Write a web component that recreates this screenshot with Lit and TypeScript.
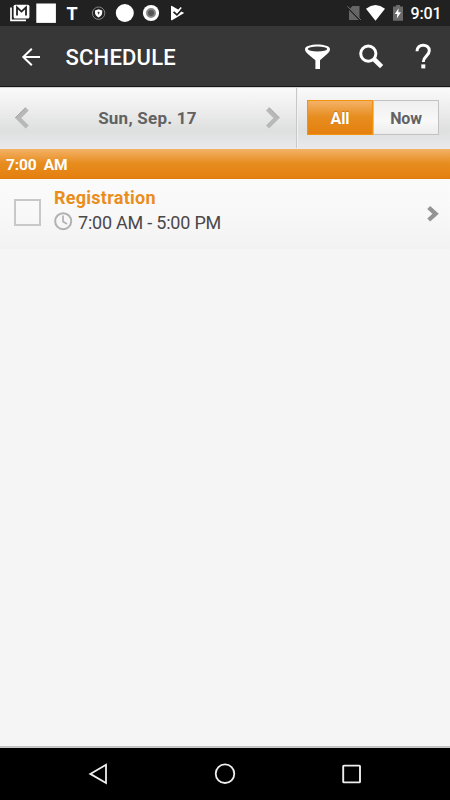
import { LitElement, html, css, svg } from "lit";
import { customElement, state } from "lit/decorators.js";

const icon = (x: number, y: number, w: number, h: number, body: unknown) =>
  html`<svg width=${w} height=${h} viewBox="${x} ${y} ${w} ${h}" aria-hidden="true">${body}</svg>`;

@customElement("status-bar")
class StatusBar extends LitElement {
  static styles = css`
    :host { display: flex; height: 26px; background: #212121; color: #fff; padding: 0 9px 0 10px; box-sizing: border-box; }
    svg { display: block; flex: none; }
    .left { display: flex; }
    .right { display: flex; margin-left: auto; }
    .t { width: 26px; text-align: center; margin-right: 6px; font: 700 18px/28px Roboto, sans-serif; }
    .clock { font: 500 16px/28px Roboto, sans-serif; margin-left: 6.5px; width: 30.5px; white-space: nowrap; letter-spacing: -.15px; }
  `;
  render() {
    return html`
      <div class="left">
        ${icon(10, 0, 49, 26, svg`
          <path d="M11 7.5V20.3H26" fill="none" stroke="#fff" stroke-width="1.7"/>
          <rect x="13.6" y="4.7" width="15.8" height="13.8" rx="1.6" fill="#fff"/>
          <path d="M17 15.6V7.4L21.5 11.6L26 7.4V15.6" fill="none" stroke="#212121" stroke-width="1.8"/>
          <rect x="36.3" y="3.5" width="19.6" height="19.4" fill="#fff"/>`)}
        <span class="t">T</span>
        ${icon(91, 0, 96, 26, svg`
          <circle cx="98.6" cy="13.2" r="6.2" fill="none" stroke="#aaa" stroke-width=".7"/>
          <path d="M98.6 9.3L102.2 10.5V13Q102 15.8 98.6 17.5Q95.2 15.8 95 13V10.5Z" fill="#fff"/>
          <path d="M97.7 11.8h1.8v1.2l-.9 1.8l-.9-1.8z" fill="#444"/>
          <circle cx="124.8" cy="13" r="9" fill="#fff"/>
          <circle cx="151" cy="13" r="8.1" fill="#fff"/>
          <circle cx="151" cy="13" r="4" fill="#555" stroke="#888" stroke-width="2"/>
          <path d="M171 6.3Q171 5.5 172 5.9L184.2 13L172 20.2Q171 20.6 171 19.5Z" fill="#fff"/>
          <path d="M178.2 8.2L181.8 5.4L184.6 8.8L182 11.5Z" fill="#212121"/>
          <path d="M173.6 11.8L176.9 14.8L181.8 9.6" fill="none" stroke="#212121" stroke-width="1.8"/>
          <path d="M175.6 10.8L177 12.3L181.2 7.4" fill="none" stroke="#fff" stroke-width="1.5"/>`)}
      </div>
      <div class="right">
        ${icon(346, 0, 58, 26, svg`
          <path d="M352.5 6H359.5V20H349V9.5Z" fill="#666"/>
          <path d="M347.4 7.2L361 20.8" stroke="#212121" stroke-width="1.8"/>
          <path d="M347.4 6.2L361 20" stroke="#777" stroke-width=".9"/>
          <path d="M366 8.7Q375.5 1.3 385 8.7L375.5 20.8Z" fill="#fff"/>
          <path d="M393 6.5H396V5H400V6.5H403V20.8H393Z" fill="#6a6a6a"/>
          <path d="M398.6 8.2L394.8 14H397.3L396.8 18.5L401 12.3H398.3Z" fill="#fff"/>`)}
        <span class="clock">9:01</span>
      </div>`;
  }
}

@customElement("title-bar")
class TitleBar extends LitElement {
  static styles = css`
    :host { display: flex; align-items: center; height: 61px; box-sizing: border-box; background: #373737; border-bottom: 1px solid #161616; padding: 2px 18px 0 21px; }
    svg { display: block; flex: none; }
    h1 { margin: 2px auto 0 24.5px; font: 500 22px/28px Roboto, sans-serif; color: #fff; letter-spacing: .2px; white-space: nowrap; }
    .actions { display: flex; gap: 28px; }
  `;
  render() {
    return html`
      ${icon(21, 28, 20, 58, svg`<path d="M40 57H23.5M31.8 48.8L23.3 57L31.8 65.2" fill="none" stroke="#fff" stroke-width="2"/>`)}
      <h1>SCHEDULE</h1>
      <div class="actions">
        ${icon(304, 28, 27, 58, svg`
          <path d="M305 49C305 43 330 43 330 49C330 52.5 326.5 54.5 320 60.2V69H315.4V60.2C308.5 54.5 305 52.5 305 49Z" fill="#fff"/>
          <ellipse cx="317.5" cy="49" rx="9.7" ry="2.5" fill="#373737"/>`)}
        ${icon(359, 28, 26, 58, svg`
          <circle cx="368.3" cy="53.6" r="7.6" fill="none" stroke="#fff" stroke-width="3"/>
          <path d="M373.3 58.5L381.6 66.6" stroke="#fff" stroke-width="4.6"/>`)}
        ${icon(413, 28, 19, 58, svg`
          <path d="M417 51.3C417 43.2 429.3 43.2 429.3 50.8C429.3 55.6 423.3 56.2 423.3 62" fill="none" stroke="#fff" stroke-width="3"/>
          <rect x="421.3" y="64.4" width="4" height="4" fill="#fff"/>`)}
      </div>`;
  }
}

@customElement("date-bar")
class DateBar extends LitElement {
  @state() private mode = "All";
  static styles = css`
    :host { display: flex; height: 62px; box-sizing: border-box; border-top: 1px solid #d4d4d4; background: linear-gradient(#fafafa 0%, #ececed 38%, #dedfdf 70%, #eaeaec 100%); }
    svg { display: block; flex: none; }
    .date { display: flex; align-items: center; justify-content: space-between; width: 297px; box-sizing: border-box; padding: 0 15px 0 14px; border-right: 1px solid #c8c8c9; margin-bottom: 1px; box-shadow: 1px 0 #f2f2f2; }
    .label { font: 700 17px/24px Roboto, sans-serif; color: #626262; letter-spacing: .24px; white-space: nowrap; }
    .toggle { display: flex; margin: 12px 0 0 10px; width: 132px; height: 35px; }
    .toggle button { flex: 1; padding: 2px 0 0; border: 1px solid #c2c2c3; border-radius: 0; background: linear-gradient(#efefef, #f9f9f9 60%, #ececec); color: #626262; font: 700 16px/20px Roboto, sans-serif; letter-spacing: -.15px; }
    .toggle button.on { border-color: #f2930f; background: linear-gradient(#f4b267, #e78d20 48%, #e4800e); color: #fff; text-shadow: 0 -1px 1px #c77418; }
  `;
  render() {
    return html`
      <div class="date">
        ${icon(14, 88, 17, 60, svg`<path d="M27.2 109L18.2 118L27.2 127" fill="none" stroke="#b8b8b8" stroke-width="4.4"/><path d="M25.6 107.6L15.2 118" stroke="#a0a0a0" stroke-width="1" fill="none"/>`)}
        <span class="label">Sun, Sep. 17</span>
        ${icon(264, 88, 17, 60, svg`<path d="M267.5 109L276.5 118L267.5 127" fill="none" stroke="#b8b8b8" stroke-width="4.4"/><path d="M269.1 107.6L279.5 118" stroke="#a0a0a0" stroke-width="1" fill="none"/>`)}
      </div>
      <div class="toggle">
        ${["All", "Now"].map((m) => html`<button class=${this.mode === m ? "on" : ""} @click=${() => (this.mode = m)}>${m}</button>`)}
      </div>`;
  }
}

@customElement("schedule-row")
class ScheduleRow extends LitElement {
  static styles = css`
    :host { display: flex; height: 70px; box-sizing: border-box; background: linear-gradient(#fbfbfb, #f8f8f9 50%, #f2f2f3); padding-right: 10px; }
    svg { display: block; flex: none; }
    .check { width: 27px; height: 27px; box-sizing: border-box; border: 2px solid #c8c8c8; margin: 20px 13px 0 14px; }
    .body { flex: 1; }
    .name { font: 700 18px/22px Roboto, sans-serif; color: #e98e1d; margin-top: 8px; white-space: nowrap; letter-spacing: .26px; }
    .time { display: flex; gap: 5px; font: 400 18px/22px Roboto, sans-serif; color: #4b4749; margin-top: 3px; white-space: nowrap; letter-spacing: -.22px; }
  `;
  render() {
    return html`
      <div class="check"></div>
      <div class="body">
        <div class="name">Registration</div>
        <div class="time">
          ${icon(54, 212, 19, 22, svg`<circle cx="63.2" cy="221.2" r="8" fill="none" stroke="#b1b1b1" stroke-width="2"/><path d="M63 215.5V221.5L67 224" fill="none" stroke="#b1b1b1" stroke-width="1.7"/>`)}
          <span>7:00 AM - 5:00 PM</span>
        </div>
      </div>
      ${icon(425, 179, 15, 70, svg`<path d="M428.7 207.5L435.6 213.8L428.7 220" fill="none" stroke="#949494" stroke-width="4.3"/>`)}`;
  }
}

@customElement("nav-bar")
class NavBar extends LitElement {
  static styles = css`
    :host { display: flex; align-items: center; justify-content: space-between; height: 54px; box-sizing: border-box; background: #000; border-top: 2px solid #c4c4c4; padding: 0 88px; }
    svg { display: block; }
  `;
  render() {
    return html`
      ${icon(88, 748, 20, 52, svg`<path d="M106 764.8V783L90.3 773.9Z" fill="none" stroke="#eee" stroke-width="1.8"/>`)}
      ${icon(214, 748, 22, 52, svg`<circle cx="225" cy="773.7" r="9.3" fill="none" stroke="#eee" stroke-width="1.8"/>`)}
      ${icon(342, 748, 20, 52, svg`<rect x="343.2" y="765.6" width="16.8" height="16.8" rx=".7" fill="none" stroke="#eee" stroke-width="1.9"/>`)}`;
  }
}

@customElement("app-root")
class AppRoot extends LitElement {
  static styles = css`
    :host { display: flex; flex-direction: column; width: 450px; height: 800px; overflow: hidden; background: #f5f5f5; }
    .hour { height: 30px; flex: none; box-sizing: border-box; padding: 2px 6px 0; border-bottom: 1px solid #df7b08; background: linear-gradient(#f4b267, #e78d20 48%, #e4800e); font: 700 15.5px/28px Roboto, sans-serif; letter-spacing: -.15px; color: #fff; white-space: pre; }
    .space { flex: 1; }
  `;
  render() {
    return html`
      <status-bar></status-bar>
      <title-bar></title-bar>
      <date-bar></date-bar>
      <div class="hour">7:00  AM</div>
      <schedule-row></schedule-row>
      <div class="space"></div>
      <nav-bar></nav-bar>`;
  }
}
